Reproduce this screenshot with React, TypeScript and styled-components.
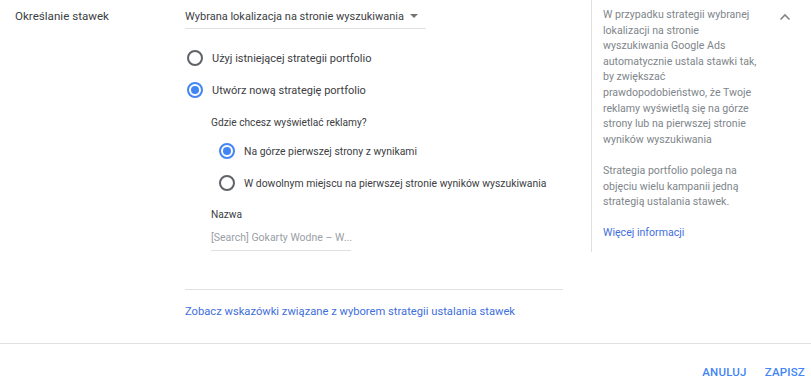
import styled, { createGlobalStyle } from "styled-components";

const GlobalStyle = createGlobalStyle`
  html, body {
    margin: 0;
    padding: 0;
    background: #fff;
  }
  body {
    font-family: Roboto, "Liberation Sans", Arial, sans-serif;
    color: #3c4043;
    -webkit-font-smoothing: antialiased;
  }
`;

const Page = styled.div`
  width: 811px;
  height: 391px;
  display: flex;
  flex-direction: column;
  overflow: hidden;
`;

const Section = styled.div`
  display: flex;
  height: 344px;
  border-bottom: 1px solid #e0e0e0;
  box-sizing: border-box;
`;

const Label = styled.div`
  width: 170px;
  padding: 9px 0 0 15px;
  font-size: 11.6px;
  line-height: 15px;
  color: #3c4043;
  white-space: nowrap;
`;

const Main = styled.div`
  width: 378px;
  display: flex;
  flex-direction: column;
`;

const Dropdown = styled.div`
  width: 241px;
  height: 29px;
  box-sizing: border-box;
  border-bottom: 1px solid #e0e0e0;
  display: flex;
  align-items: flex-start;
  padding-top: 9px;
  font-size: 11px;
  line-height: 15px;
  color: #3c4043;
  white-space: nowrap;
`;

const Caret = styled.span`
  margin-left: 6px;
  margin-top: 5px;
  width: 0;
  height: 0;
  border-left: 4px solid transparent;
  border-right: 4px solid transparent;
  border-top: 4px solid #757575;
`;

const RadioList = styled.div<{ $indent?: number; $top: number }>`
  display: flex;
  flex-direction: column;
  gap: 16px;
  margin-left: ${(p) => p.$indent ?? 2}px;
  margin-top: ${(p) => p.$top}px;
`;

const RadioRow = styled.label<{ $size: number }>`
  display: flex;
  align-items: center;
  height: 16px;
  gap: 9px;
  font-size: ${(p) => p.$size}px;
  color: #3c4043;
  white-space: nowrap;
`;

const RadioCircle = styled.span<{ $checked?: boolean }>`
  width: 16px;
  height: 16px;
  box-sizing: border-box;
  border-radius: 50%;
  border: 2px solid ${(p) => (p.$checked ? "#4285f4" : "#5f6368")};
  display: flex;
  align-items: center;
  justify-content: center;
  flex-shrink: 0;

  &::after {
    content: "";
    display: ${(p) => (p.$checked ? "block" : "none")};
    width: 8px;
    height: 8px;
    border-radius: 50%;
    background: #4285f4;
  }
`;

const SubBlock = styled.div`
  margin-left: 26px;
  display: flex;
  flex-direction: column;
`;

const Question = styled.div`
  margin-top: 18px;
  font-size: 10.2px;
  line-height: 14px;
  color: #3c4043;
  white-space: nowrap;
`;

const FieldLabel = styled.div`
  margin-top: 17px;
  font-size: 10.2px;
  line-height: 14px;
  color: #3c4043;
`;

const Input = styled.div`
  width: 140px;
  margin-top: 9px;
  padding-bottom: 5px;
  border-bottom: 1px solid #e0e0e0;
  font-size: 10.5px;
  line-height: 14px;
  color: #9aa0a6;
  white-space: nowrap;
`;

const Divider = styled.div`
  margin-top: 38px;
  height: 1px;
  background: #e0e0e0;
`;

const Link = styled.a`
  margin-top: 14px;
  font-size: 11.2px;
  line-height: 16px;
  color: #3f6fdc;
  text-decoration: none;
  white-space: nowrap;
`;

const Help = styled.div`
  margin-left: 28px;
  width: 199px;
  height: 252px;
  border-left: 1px solid #e0e0e0;
  padding: 7px 0 0 11px;
  box-sizing: border-box;
  display: flex;
  justify-content: space-between;
  align-items: flex-start;
`;

const HelpText = styled.div`
  width: 158px;
  font-size: 10.6px;
  line-height: 15.6px;
  color: #80868b;

  p {
    margin: 0 0 15.6px;
  }
`;

const HelpLink = styled.a`
  color: #3f6fdc;
  text-decoration: none;
`;

const Chevron = styled.svg`
  margin: 6px -1px 0 0;
  flex-shrink: 0;
`;

const Footer = styled.div`
  display: flex;
  justify-content: flex-end;
  gap: 18px;
  padding: 21px 6px 0 0;
`;

const TextButton = styled.button`
  border: none;
  background: none;
  padding: 0;
  font-family: inherit;
  font-size: 11.5px;
  font-weight: 500;
  letter-spacing: 0.2px;
  color: #4285f4;
  cursor: pointer;
`;

const Radio = ({ checked, size = 11, children }: { checked?: boolean; size?: number; children: string }) => (
  <RadioRow $size={size}>
    <RadioCircle $checked={checked} />
    {children}
  </RadioRow>
);

export default function App() {
  return (
    <>
      <GlobalStyle />
      <Page>
        <Section>
          <Label>Określanie stawek</Label>
          <Main>
            <Dropdown>
              Wybrana lokalizacja na stronie wyszukiwania
              <Caret />
            </Dropdown>
            <RadioList $top={21}>
              <Radio>Użyj istniejącej strategii portfolio</Radio>
              <Radio checked>Utwórz nową strategię portfolio</Radio>
            </RadioList>
            <SubBlock>
              <Question>Gdzie chcesz wyświetlać reklamy?</Question>
              <RadioList $top={13} $indent={8}>
                <Radio checked size={10.4}>Na górze pierwszej strony z wynikami</Radio>
                <Radio size={10.4}>W dowolnym miejscu na pierwszej stronie wyników wyszukiwania</Radio>
              </RadioList>
              <FieldLabel>Nazwa</FieldLabel>
              <Input>[Search] Gokarty Wodne – W...</Input>
            </SubBlock>
            <Divider />
            <Link href="#">Zobacz wskazówki związane z wyborem strategii ustalania stawek</Link>
          </Main>
          <Help>
            <HelpText>
              <p>
                W przypadku strategii wybranej lokalizacji na stronie wyszukiwania Google Ads
                automatycznie ustala stawki tak, by zwiększać prawdopodobieństwo, że Twoje
                reklamy wyświetlą się na górze strony lub na pierwszej stronie wyników
                wyszukiwania
              </p>
              <p>Strategia portfolio polega na objęciu wielu kampanii jedną strategią ustalania stawek.</p>
              <HelpLink href="#">Więcej informacji</HelpLink>
            </HelpText>
            <Chevron width="12" height="8" viewBox="0 0 12 8">
              <path d="M1.5 6.5 L6 2 L10.5 6.5" fill="none" stroke="#80868b" strokeWidth="1.6" />
            </Chevron>
          </Help>
        </Section>
        <Footer>
          <TextButton>ANULUJ</TextButton>
          <TextButton>ZAPISZ</TextButton>
        </Footer>
      </Page>
    </>
  );
}
